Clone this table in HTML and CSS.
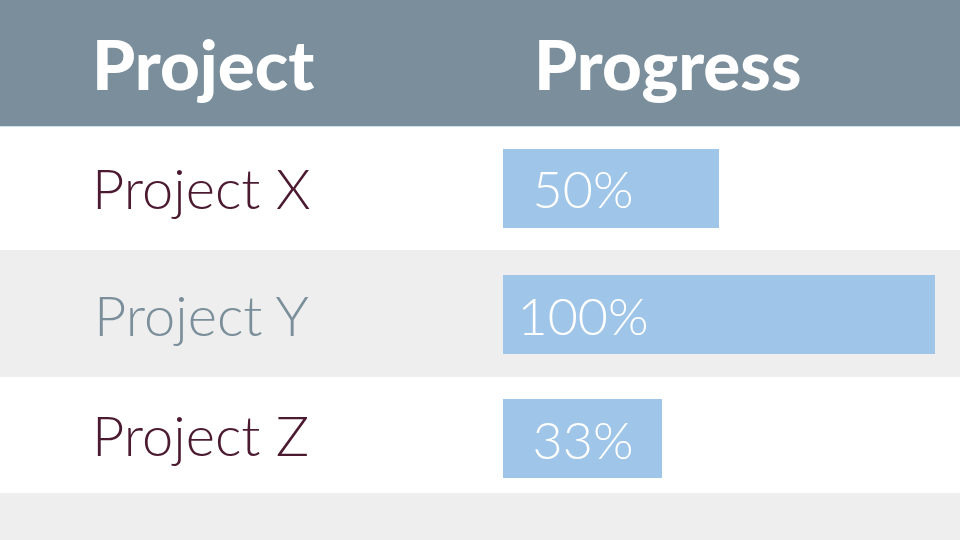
FILE: index.html
```html
<!DOCTYPE html>
<html>
<head>
<meta charset="utf-8">
<link rel="stylesheet" href="styles.css">
</head>
<body>
<div class="table">
  <div class="head">
    <div class="col-name">Project</div>
    <div class="col-prog">Progress</div>
  </div>
  <div class="row r1">
    <div class="name dark">Project X</div>
    <div class="bar" style="width:216px"><span class="pct">50%</span></div>
  </div>
  <div class="row r2 alt">
    <div class="name slate">Project Y</div>
    <div class="bar" style="width:432px"><span class="pct">100%</span></div>
  </div>
  <div class="row r3">
    <div class="name dark">Project Z</div>
    <div class="bar" style="width:159px"><span class="pct">33%</span></div>
  </div>
  <div class="filler"></div>
</div>
</body>
</html>
```
FILE: styles.css
```css
html, body {
  margin: 0;
  padding: 0;
  width: 960px;
  height: 540px;
  overflow: hidden;
  background: #eeeeee;
}
.table {
  display: flex;
  flex-direction: column;
  height: 540px;
  font-family: "Lato", "Open Sans", sans-serif;
}
.head {
  height: 126px;
  background: #7a8f9b;
  border-bottom: 1px solid #cfe0ee;
  display: flex;
  align-items: center;
  color: #ffffff;
  font-weight: 900;
  font-size: 69px;
  box-sizing: content-box;
}
.col-name {
  width: 410px;
  padding-left: 92px;
}
.col-prog {
  padding-left: 32px;
}
.row {
  display: flex;
  align-items: center;
  background: #ffffff;
  box-sizing: border-box;
}
.row.alt {
  background: #eeeeee;
  margin-left: 2px;
}
.r1 { height: 123px; padding-bottom: 1px; }
.r2 { height: 127px; padding-top: 2px; }
.r3 { height: 116px; padding-top: 7px; }
.name {
  width: 411px;
  padding-left: 92px;
  font-size: 56px;
  font-weight: 300;
  line-height: 1;
}
.r3 .name { padding-bottom: 8px; }
.alt .name { width: 409px; }
.dark { color: #4b1a31; }
.slate { color: #7b8f9b; }
.bar {
  height: 79px;
  background: #9fc5e8;
  display: flex;
  align-items: center;
}
.pct {
  width: 160px;
  flex: none;
  text-align: center;
  color: #ffffff;
  font-size: 52px;
  font-weight: 300;
  line-height: 1;
}
.filler {
  flex: 1;
  background: #eeeeee;
}
```
